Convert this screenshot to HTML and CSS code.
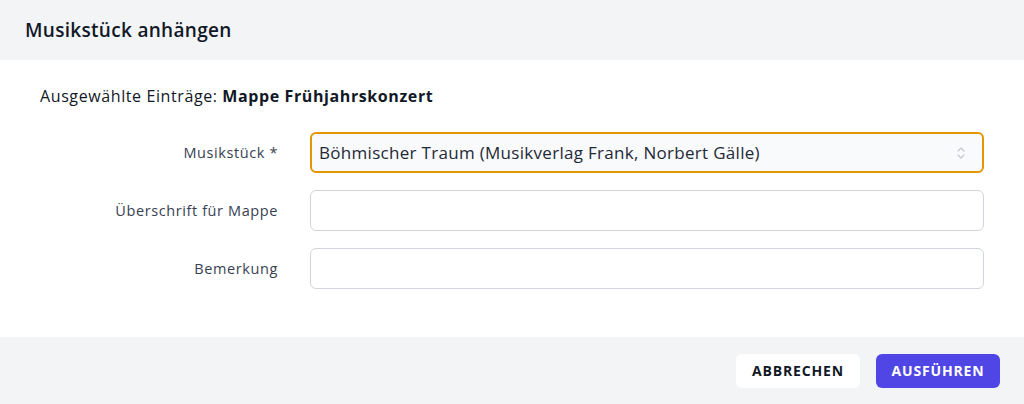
FILE: index.html
```html
<!DOCTYPE html>
<html lang="de">
<head>
<meta charset="utf-8">
<link rel="stylesheet" href="styles.css">
</head>
<body>
<div class="dialog">
  <header class="head"><h1 class="title">Musikstück anhängen</h1></header>
  <main class="body">
    <p class="selected">Ausgewählte Einträge: <strong>Mappe Frühjahrskonzert</strong></p>
    <div class="row">
      <label class="label">Musikstück *</label>
      <div class="select">
        <span class="select-text">Böhmischer Traum (Musikverlag Frank, Norbert Gälle)</span>
        <svg class="chev" width="10" height="16" viewBox="0 0 10 16"><path d="M2 6 L5 3 L8 6 M2 10 L5 13 L8 10" fill="none" stroke="#c5cad3" stroke-width="1.3" stroke-linecap="round" stroke-linejoin="round"/></svg>
      </div>
    </div>
    <div class="row">
      <label class="label">Überschrift für Mappe</label>
      <div class="input"></div>
    </div>
    <div class="row">
      <label class="label">Bemerkung</label>
      <div class="input"></div>
    </div>
  </main>
  <footer class="foot">
    <button class="btn btn-cancel">Abbrechen</button>
    <button class="btn btn-primary">Ausführen</button>
  </footer>
</div>
</body>
</html>
```
FILE: styles.css
```css
* { box-sizing: border-box; }
html, body { margin: 0; padding: 0; }
body {
  width: 1024px;
  height: 404px;
  font-family: "Open Sans", "Noto Sans", sans-serif;
  color: #111827;
  background: #fff;
}
.dialog { display: flex; flex-direction: column; height: 404px; }
.head {
  background: #f3f4f6;
  height: 60px;
  display: flex;
  align-items: center;
  padding: 0 25px;
}
.title { margin: 0; font-size: 19px; font-weight: 600; color: #111827; letter-spacing: 0.3px; }
.body { flex: 1; padding: 24px 40px 0 40px; }
.selected { margin: 0 0 24px 0; font-size: 16px; line-height: 24px; color: #111827; letter-spacing: 0.6px; }
.selected strong { font-weight: 700; }
.row { display: flex; align-items: center; margin-bottom: 17px; }
.label {
  width: 238px;
  text-align: right;
  font-size: 14.5px;
  letter-spacing: 0.6px;
  color: #374151;
}
.select, .input {
  margin-left: 32px;
  width: 674px;
  height: 41px;
  border-radius: 6px;
}
.select {
  border: 2px solid #e49600;
  background: #f8fafc;
  display: flex;
  align-items: center;
  justify-content: space-between;
  padding: 0 16px 0 7px;
}
.select-text { font-size: 17px; color: #1f2937; letter-spacing: 0.3px; }
.input { border: 1px solid #d1d5db; background: #fff; }
.foot {
  background: #f3f4f6;
  height: 67px;
  display: flex;
  align-items: center;
  justify-content: flex-end;
  gap: 16px;
  padding: 0 24px;
}
.btn {
  height: 34px;
  width: 124px;
  border: 0;
  border-radius: 6px;
  font-family: inherit;
  font-size: 14px;
  font-weight: 700;
  letter-spacing: 0.06em;
  text-transform: uppercase;
}
.btn-cancel { background: #fff; color: #111827; }
.btn-primary { background: #5046e5; color: #fff; }
```
